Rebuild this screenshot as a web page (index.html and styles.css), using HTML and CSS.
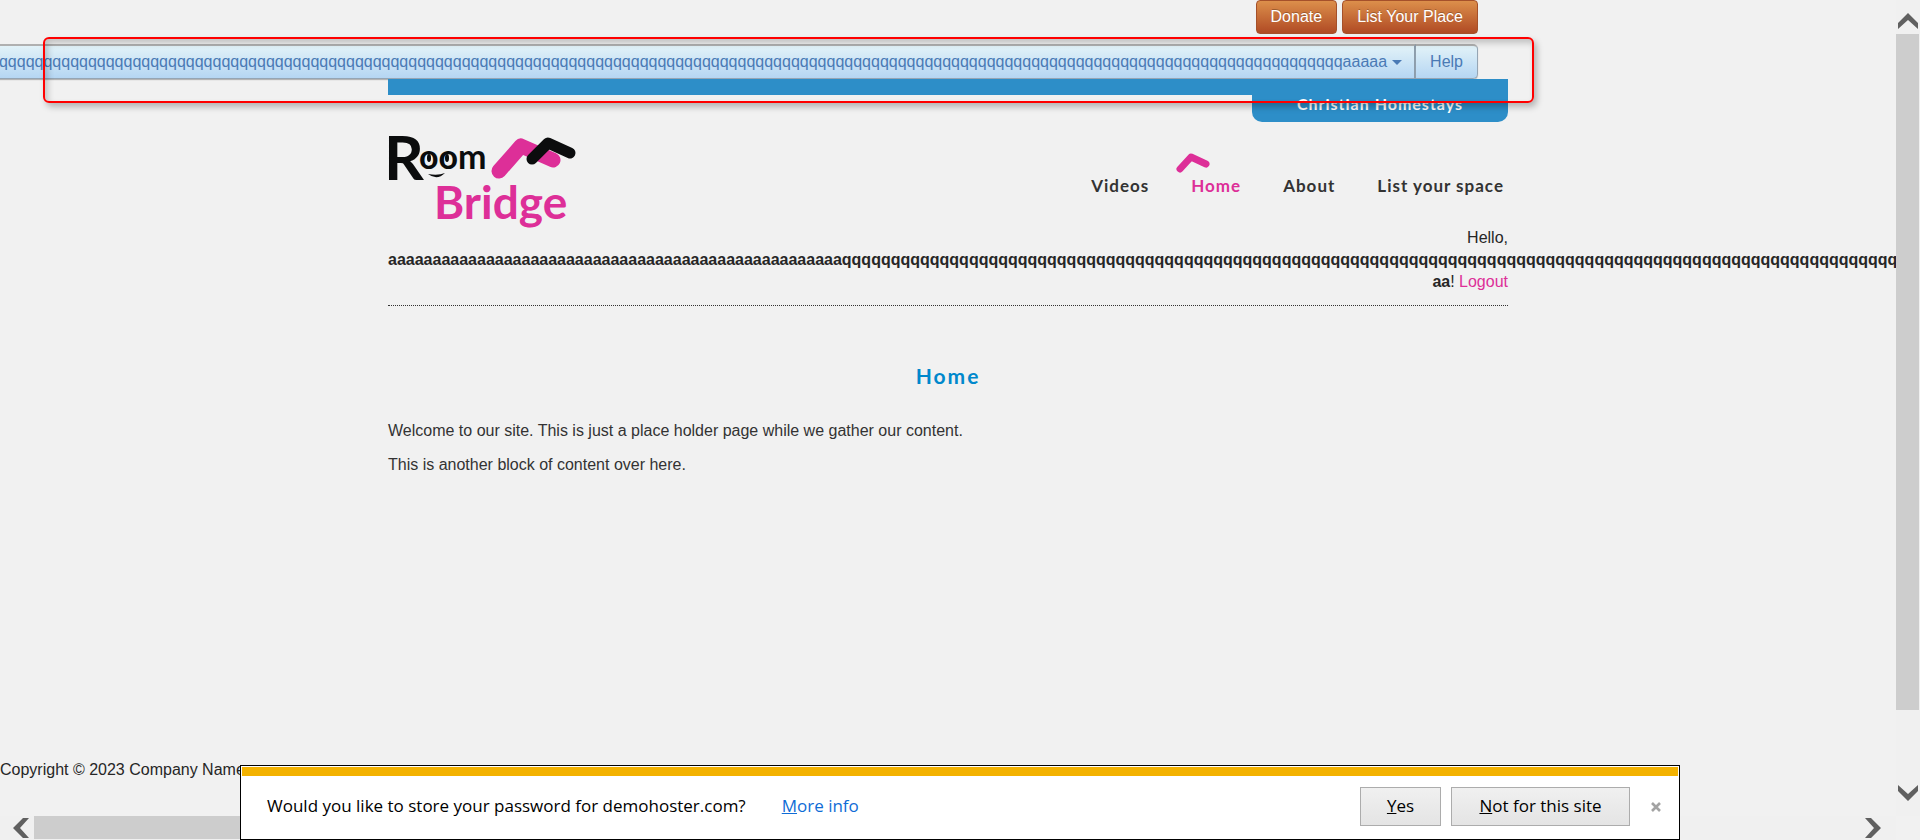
FILE: index.html
```
<!DOCTYPE html>
<html lang="en">
<head>
<meta charset="utf-8">
<title>Room Bridge - Home</title>
<link rel="stylesheet" href="styles.css">
</head>
<body>
<div class="window">
  <div class="page">
    <div class="toolbar">
      <div class="actions">
        <button class="action" type="button">Donate</button>
        <button class="action" type="button">List Your Place</button>
      </div>
      <div class="account">
        <button class="account-item account-user" type="button">qqqqqqqqqqqqqqqqqqqqqqqqqqqqqqqqqqqqqqqqqqqqqqqqqqqqqqqqqqqqqqqqqqqqqqqqqqqqqqqqqqqqqqqqqqqqqqqqqqqqqqqqqqqqqqqqqqqqqqqqqqqqqqqqqqqqqqqqqqqqqqqqqqqqqqqaaaaa<span class="caret"></span></button>
        <a class="account-item" href="#">Help</a>
      </div>
    </div>
    <div class="container">
      <div class="banner"><div class="tagline">Christian Homestays</div></div>
      <header class="header">
        <svg class="logo" viewBox="0 0 190 108" role="img" aria-label="Room Bridge">
          <path d="M111 40 L133 15 L165 29" fill="none" stroke="#dd2f98" stroke-width="15" stroke-linecap="round" stroke-linejoin="round"/>
          <path d="M144 28 L160 12 L182 22" fill="none" stroke="#0b0c0d" stroke-width="11" stroke-linecap="round" stroke-linejoin="round"/>
          <text class="logo-r" x="-4" y="49">R</text>
          <text class="logo-oom" x="31" y="38">oom</text>
          <path d="M40 43 Q49 50 57 42 Q50 45 40 43Z" fill="#0b0c0d"/>
          <ellipse cx="41" cy="27" rx="2" ry="4" fill="#0b0c0d"/>
          <ellipse cx="59" cy="27" rx="2" ry="4" fill="#0b0c0d"/>
          <text class="logo-bridge" x="46" y="88">Bridge</text>
        </svg>
        <nav class="menu">
          <a href="#">Videos</a>
          <a href="#" class="current">Home<svg class="roof" viewBox="0 0 34 20" aria-hidden="true"><path d="M4 16 L15 4 L30 11" fill="none" stroke="#dd2f98" stroke-width="7" stroke-linecap="round" stroke-linejoin="round"/></svg></a>
          <a href="#">About</a>
          <a href="#">List your space</a>
        </nav>
      </header>
      <div class="login">Hello, <strong>aaaaaaaaaaaaaaaaaaaaaaaaaaaaaaaaaaaaaaaaaaaaaaaaaaaqqqqqqqqqqqqqqqqqqqqqqqqqqqqqqqqqqqqqqqqqqqqqqqqqqqqqqqqqqqqqqqqqqqqqqqqqqqqqqqqqqqqqqqqqqqqqqqqqqqqqqqqqqqqqqqqqqqq aa</strong>! <a href="#">Logout</a></div>
      <main class="content">
        <h1>Home</h1>
        <p>Welcome to our site. This is just a place holder page while we gather our content.</p>
        <p>This is another block of content over here.</p>
      </main>
    </div>
    <footer class="footer">Copyright © 2023 Company Name</footer>
    <div class="highlight"></div>
  </div>
  <div class="scroll scroll-y">
    <svg viewBox="0 0 20 16" aria-hidden="true"><path d="M0 10 L10 0 L20 10 V16 L10 7 L0 16Z"/></svg>
    <div class="track"><div class="thumb"></div></div>
    <svg viewBox="0 0 20 16" aria-hidden="true"><path d="M0 6 L10 16 L20 6 V0 L10 9 L0 0Z"/></svg>
  </div>
  <div class="scroll scroll-x">
    <svg viewBox="0 0 16 20" aria-hidden="true"><path d="M10 0 L0 10 L10 20 H16 L7 10 L16 0Z"/></svg>
    <div class="track"><div class="thumb"></div></div>
    <svg viewBox="0 0 16 20" aria-hidden="true"><path d="M6 0 L16 10 L6 20 H0 L9 10 L0 0Z"/></svg>
  </div>
  <div class="prompt" role="dialog" aria-label="Store password">
    <span>Would you like to store your password for demohoster.com?</span>
    <a href="#"><u>M</u>ore info</a>
    <div class="prompt-actions">
      <button class="choice" type="button"><u>Y</u>es</button>
      <button class="choice choice-wide" type="button"><u>N</u>ot for this site</button>
      <button class="close" type="button" aria-label="Close"><svg viewBox="0 0 10 10" aria-hidden="true"><path d="M1 1 L9 9 M9 1 L1 9" stroke="#a3a3a3" stroke-width="2.6"/></svg></button>
    </div>
  </div>
</div>
</body>
</html>
```
FILE: styles.css
```
* { box-sizing: border-box; }
body {
  margin: 0;
  font: 16px/22px "Liberation Sans", Arial, sans-serif;
  color: #262626;
  background: #f1f1f1;
}
a { color: #dd2f98; text-decoration: none; }
button { font: inherit; }
.window {
  position: relative;
  height: 100vh;
  display: grid;
  grid-template: minmax(0, 1fr) 24px / minmax(0, 1fr) 24px;
  overflow: hidden;
}
.page {
  position: relative;
  display: flex;
  flex-direction: column;
  overflow: hidden;
}
.container, .toolbar { width: 1120px; max-width: 100%; margin: 0 auto; }
.toolbar { padding-right: 30px; }
.actions { display: flex; justify-content: flex-end; gap: 5px; }
.action {
  height: 34px;
  padding: 0 14px 1px;
  border: 1px solid #a5502a;
  border-radius: 4px;
  background: linear-gradient(#dc8f4b, #b04a24);
  color: #fff;
  text-shadow: 0 -1px 0 rgba(0, 0, 0, .25);
}
.account {
  display: flex;
  justify-content: flex-end;
  margin-top: 10px;
}
.account-item {
  flex: none;
  height: 35px;
  padding: 0 14px;
  border: 1px solid #95a5b4;
  border-top: 2px solid #b0b0b0;
  border-left: 0;
  background: linear-gradient(#e2f2f8, #b5d6f3);
  color: #4a7ab5;
  line-height: 32px;
  white-space: nowrap;
  box-shadow: 0 1px 1px #b5b5b5;
}
.account-item:last-child { border-radius: 0 5px 5px 0; }
.account-user { padding-right: 12px; border-right: 2px solid #8c9dac; }
.caret {
  display: inline-block;
  margin-left: 5px;
  border: 5px solid transparent;
  border-top-color: #4a7ab5;
  border-bottom: 0;
  vertical-align: middle;
}
.banner {
  display: flex;
  justify-content: flex-end;
  height: 16px;
  background: #2d8ec8;
}
.tagline {
  width: 256px;
  height: 43px;
  padding-top: 14px;
  border-radius: 0 0 10px 10px;
  background: #2d8ec8;
  color: #fff;
  font: 700 16px/22px Lato, sans-serif;
  letter-spacing: 1px;
  text-align: center;
}
.header {
  display: flex;
  justify-content: space-between;
  align-items: flex-start;
  padding-top: 36px;
}
.logo { flex: none; width: 190px; height: 108px; overflow: visible; }
.logo text { font-family: Lato, sans-serif; font-weight: 700; fill: #0b0c0d; }
.logo .logo-r { font-size: 62px; }
.logo .logo-oom { font-size: 34px; }
.logo .logo-bridge { font-size: 46px; fill: #dd2f98; }
.menu {
  display: flex;
  gap: 42px;
  padding: 44px 4px 0 0;
  font: 700 17px/22px Lato, sans-serif;
  letter-spacing: 1px;
}
.menu a { position: relative; color: #333; }
.menu .current { color: #dd2f98; }
.roof { position: absolute; left: -15px; top: -22px; width: 34px; height: 20px; }
.login {
  margin-top: -12px;
  padding-bottom: 12px;
  border-bottom: 1px dotted #333;
  line-height: 22px;
  text-align: right;
}
.content { padding-top: 56px; color: #333; }
.content h1 {
  margin: 0 0 30px;
  color: #0088cc;
  font: 700 21px/28px Lato, sans-serif;
  letter-spacing: 2px;
  text-align: center;
}
.content p { margin: 0 0 12px; }
.footer { margin-top: auto; padding-bottom: 35px; }
.highlight {
  position: absolute;
  top: 37px;
  left: 43px;
  right: 362px;
  height: 66px;
  border: 2px solid #f00;
  border-radius: 6px;
  box-shadow: 3px 4px 6px rgba(0, 0, 0, .25), inset 3px 4px 6px rgba(0, 0, 0, .2);
}
.scroll { display: flex; align-items: center; background: #f0f0f0; }
.scroll svg { flex: none; fill: #606060; }
.scroll .track { flex: 1; }
.scroll .thumb { background: #cdcdcd; }
.scroll-y { flex-direction: column; padding: 13px 0 15px; }
.scroll-y svg { width: 20px; height: 16px; }
.scroll-y .track { width: 24px; padding: 5px 1px 0 0; }
.scroll-y .thumb { height: 90%; }
.scroll-x { grid-column: 1; padding: 0 15px 0 13px; }
.scroll-x svg { width: 16px; height: 20px; }
.scroll-x .track { height: 24px; padding: 0 0 1px 5px; }
.scroll-x .thumb { width: 60%; height: 23px; }
.prompt {
  position: absolute;
  bottom: 0;
  left: 240px;
  right: 240px;
  display: flex;
  align-items: center;
  gap: 36px;
  height: 75px;
  padding: 7px 7px 0 26px;
  border: 1px solid #000;
  background: linear-gradient(#f3b200, #f3b200) 1px 1px / calc(100% - 2px) 9px no-repeat #fff;
  color: #000;
  font: 17px/24px "Open Sans", "Noto Sans", sans-serif;
}
.prompt a { color: #0f6cd6; }
.prompt-actions { display: flex; align-items: center; gap: 10px; margin-left: auto; }
.choice {
  width: 81px;
  height: 39px;
  padding: 0;
  border: 1px solid #acacac;
  background: linear-gradient(#f0f0f0, #e4e4e4);
  color: #000;
}
.choice-wide { width: 179px; }
.close { width: 32px; height: 32px; padding: 0; border: 0; background: none; }
.close svg { width: 10px; height: 10px; }
```
